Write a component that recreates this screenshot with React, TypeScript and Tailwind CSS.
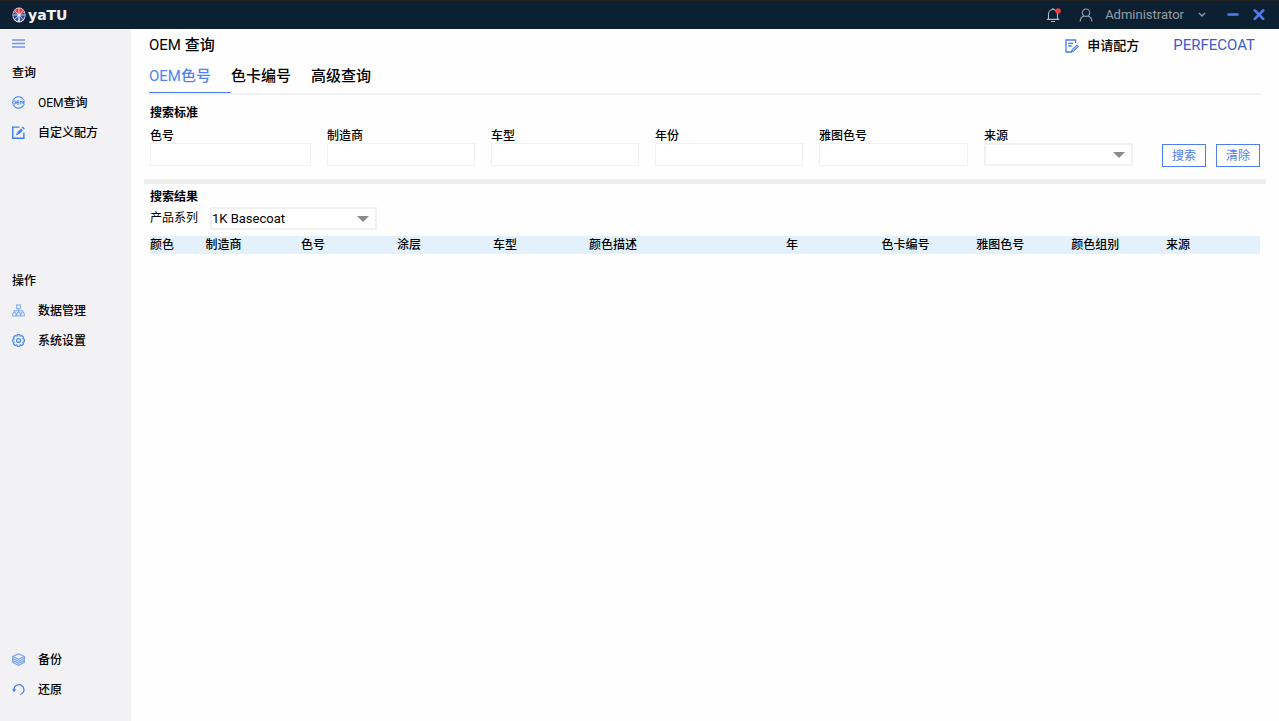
import type { ReactNode } from "react";

const OemIcon = () => (
  <svg viewBox="0 0 14 14" className="mb-px size-[13px]" fill="none" stroke="#3f7df0">
    <path d="M1.6 4.2A6 6 0 0 1 12.4 4.2M1.6 9.8A6 6 0 0 0 12.4 9.8" strokeWidth="1.1" />
    <path d="M.6 4v6M13.4 4v6" strokeWidth=".7" opacity=".7" />
    <rect x="1" y="5.3" width="2.8" height="3.4" rx=".8" strokeWidth="1" />
    <path d="M8 5.3H5.3v3.4H8M5.3 7h2.5M9.5 9.1V5.3l1.4 2.2 1.4-2.2v3.8" strokeWidth="1" />
  </svg>
);

const EditIcon = () => (
  <svg viewBox="0 0 14 14" className="mb-px size-[13px]" fill="none" stroke="#3f7df0">
    <path d="M8 1.2H.8v12h12V7" strokeWidth="1.5" />
    <path d="M6.2 8.3l4.6-4.7" strokeWidth="2.8" />
    <path d="M11.6 2.8l1.2-1.2" strokeWidth="3" />
    <path d="M4.4 9.9l.6-2.4 1.8 1.8z" fill="#3f7df0" stroke="none" />
  </svg>
);

const DataIcon = () => (
  <svg viewBox="0 0 14 14" className="mb-px size-[13px]" fill="none" stroke="#7fa9f5" strokeWidth="1.1">
    <rect x="5" y="1" width="4" height="4" />
    <path d="M7 5v4M2.5 9V7.2h9V9" />
    <path d="M.8 13v-2.5L2 9h1.2l1.2 1.5V13zM5.2 13v-2.5L6.4 9h1.2l1.2 1.5V13zM9.6 13v-2.5L10.8 9H12l1.2 1.5V13z" />
  </svg>
);

const GearIcon = () => (
  <svg viewBox="0 0 14 14" className="mb-px size-[13px]" fill="none" stroke="#4f8af3" strokeWidth="1.3">
    <path d="M5.7.7h2.6l.5 1.7 1.7-.8 1.9 1.9-.8 1.7 1.7.5v2.6l-1.7.5.8 1.7-1.9 1.9-1.7-.8-.5 1.7H5.7l-.5-1.7-1.7.8-1.9-1.9.8-1.7L.7 8.3V5.7l1.7-.5-.8-1.7 1.9-1.9 1.7.8z" strokeLinejoin="round" />
    <circle cx="7" cy="7" r="2.1" />
  </svg>
);

const LayersIcon = () => (
  <svg viewBox="0 0 14 14" className="mb-px size-[13px]" fill="none" stroke="#6fa0f5" strokeWidth="1.2" strokeLinejoin="round">
    <path d="M7 .8l6.3 3L7 6.8l-6.3-3z" />
    <path d="M.7 3.8V10L7 13.2l6.3-3.2V3.8M.7 6L7 9l6.3-3M.7 8L7 11l6.3-3" />
  </svg>
);

const RestoreIcon = () => (
  <svg viewBox="0 0 14 14" className="mb-px size-[13px]" fill="none" stroke="#3f7df0" strokeWidth="1.3">
    <path d="M2.2 8.2A5.4 5.4 0 1 1 8.8 12.4" />
    <path d="M0 6.8h4.6L2.2 10z" fill="#3f7df0" stroke="none" />
  </svg>
);

const RequestIcon = () => (
  <svg viewBox="0 0 14 14" className="size-[14px]" fill="none" stroke="#3f7df0" strokeWidth="1.3">
    <path d="M10.6 4V1H1v12h6.2" />
    <path d="M3.2 4.3h5M3.2 7h3.5" />
    <path d="M6.8 10.8l5-4.8 1.6 1.6-4.9 4.6-2 .4z" fill="#8db4f8" strokeWidth="1" />
  </svg>
);

const LogoMark = () => (
  <svg viewBox="0 0 14 16" className="h-4 w-[14px]">
    <ellipse cx="7" cy="8" rx="6.6" ry="7.6" fill="#e6e9ef" />
    <path d="M7 8L1.6 5A6 6.6 0 0 1 12.4 5z" fill="#e03a3e" />
    <path d="M7 8L1.6 5.3A6 6.6 0 0 0 6 14.4zM7 8l5.4-2.7A6 6.6 0 0 1 8 14.4z" fill="#2c4aa5" />
    <path d="M7 1v14M1 8h12M2.6 3.2l8.8 9.6M11.4 3.2l-8.8 9.6" stroke="#e6e9ef" strokeWidth=".8" />
    <circle cx="7" cy="8" r="1.5" fill="#e6e9ef" />
  </svg>
);

const NavItem = ({ icon, children }: { icon: ReactNode; children: ReactNode }) => (
  <a href="#" className="flex h-[30px] items-center gap-[13px] px-3">
    {icon}
    <span>{children}</span>
  </a>
);

const Arrow = () => (
  <svg viewBox="0 0 12 6" className="pointer-events-none absolute top-[9px] right-2 h-[6px] w-3">
    <path d="M0 0h12L6 6z" fill="#858b8f" />
  </svg>
);

const fields = [
  ["code", "色号"],
  ["maker", "制造商"],
  ["model", "车型"],
  ["year", "年份"],
  ["yatu", "雅图色号"],
];

const columns: [string, string][] = [
  ["颜色", "w-[5%]"],
  ["制造商", "w-[8.6%]"],
  ["色号", "w-[8.65%]"],
  ["涂层", "w-[8.65%]"],
  ["车型", "w-[8.65%]"],
  ["颜色描述", "w-[17.75%]"],
  ["年", "w-[8.6%]"],
  ["色卡编号", "w-[8.55%]"],
  ["雅图色号", "w-[8.55%]"],
  ["颜色组别", "w-[8.55%]"],
  ["来源", "w-[8.45%]"],
];

export default function App() {
  return (
    <div className="flex min-h-screen flex-col bg-[#fefefe] font-['Roboto','Noto_Sans_CJK_SC',sans-serif] text-xs text-black">
      <header className="flex h-[29px] items-center border-t border-[#222222] bg-[#0c2032] px-3">
        <div className="flex items-center gap-[2px]">
          <LogoMark />
          <span className="font-['DejaVu_Sans',sans-serif] text-[14px] leading-4 font-bold text-[#f1f3f5]">yaTU</span>
        </div>
        <div className="ml-auto flex items-center">
          <button aria-label="通知" className="mr-[18px]">
            <svg viewBox="0 0 16 16" className="size-4" fill="none" stroke="#b4babf" strokeWidth="1.1">
              <path d="M3.5 12V7a4.5 4.5 0 0 1 9 0v5M1.8 12.4h12.4M6 14.5h4M8 2.5V1" />
              <circle cx="13" cy="4" r="2.8" fill="#f5393d" stroke="none" />
            </svg>
          </button>
          <svg viewBox="0 0 14 14" className="mr-3 size-[14px]" fill="none" stroke="#969ca1" strokeWidth="1.2">
            <circle cx="7" cy="4.7" r="3.7" />
            <path d="M1.2 13.6c0-3 2-5 4-5.4M12.8 13.6c0-3-2-5-4-5.4" />
          </svg>
          <button className="flex items-center gap-[14px] text-[13px] text-[#979ea4]">
            Administrator
            <svg viewBox="0 0 8 6" className="h-[6px] w-2" fill="none" stroke="#979ea4" strokeWidth="1.3">
              <path d="M1 1l3 3 3-3" />
            </svg>
          </button>
          <button aria-label="最小化" className="ml-[21px]">
            <svg viewBox="0 0 12 12" className="size-3">
              <path d="M1.5 5.5h9" stroke="#4d7df0" strokeWidth="2.6" strokeLinecap="round" />
            </svg>
          </button>
          <button aria-label="关闭" className="mr-[2px] ml-[14px]">
            <svg viewBox="0 0 12 12" className="size-3">
              <path d="M1.8 1.4l8.4 8.4M10.2 1.4l-8.4 8.4" stroke="#4d7df0" strokeWidth="2.6" strokeLinecap="round" />
            </svg>
          </button>
        </div>
      </header>

      <div className="flex flex-1">
        <aside className="flex w-[131px] shrink-0 flex-col bg-[#f2f2f5] pb-4 font-medium">
          <button aria-label="菜单" className="flex h-[29px] items-center px-3">
            <svg viewBox="0 0 13 9" className="h-[9px] w-[13px]" stroke="#7396ea">
              <path d="M0 1h13M0 4.5h13M0 8h13" strokeWidth="1.6" />
            </svg>
          </button>
          <nav>
            <h2 className="px-3 leading-[30px]">查询</h2>
            <NavItem icon={<OemIcon />}><span className="font-normal">OEM</span>查询</NavItem>
            <NavItem icon={<EditIcon />}>自定义配方</NavItem>
          </nav>
          <nav className="mt-[118px]">
            <h2 className="px-3 leading-[30px]">操作</h2>
            <NavItem icon={<DataIcon />}>数据管理</NavItem>
            <NavItem icon={<GearIcon />}>系统设置</NavItem>
          </nav>
          <nav className="mt-auto">
            <NavItem icon={<LayersIcon />}>备份</NavItem>
            <NavItem icon={<RestoreIcon />}>还原</NavItem>
          </nav>
        </aside>

        <main className="min-w-0 flex-1 px-[13px]">
          <div className="flex h-[34px] items-center px-[5px]">
            <h1 className="text-[15px]">OEM <span className="font-medium">查询</span></h1>
            <a href="#" className="ml-auto flex items-center gap-2 text-[13px] font-medium">
              <RequestIcon />
              申请配方
            </a>
            <span className="mr-[6px] ml-[34px] text-[15px] text-[#3f5bd0]">PERFECOAT</span>
          </div>
          <div role="tablist" className="mx-[5px] flex h-8 border-b-2 border-[#f1f1f5] text-[15px] font-medium">
            <button role="tab" aria-selected="true" className="flex h-[30px] w-[82px] items-center border-b border-[#4d7df0] pb-px text-[#4d83f2]">
              <span className="font-normal">OEM</span>色号
            </button>
            <button role="tab" aria-selected="false" className="flex h-[30px] w-20 items-center pb-[2px]">色卡编号</button>
            <button role="tab" aria-selected="false" className="flex h-[30px] items-center pb-[2px]">高级查询</button>
          </div>

          <form className="px-[6px] pt-[9px] pb-3">
            <h2 className="leading-[18px] font-bold">搜索标准</h2>
            <div className="mt-[5px] flex items-start">
              <div className="grid flex-1 grid-cols-[161fr_148fr_148fr_148fr_149fr_149fr] gap-4">
                {fields.map(([id, label]) => (
                  <div key={id}>
                    <label htmlFor={id} className="block h-4 leading-[18px] font-medium">{label}</label>
                    <input id={id} className="block h-[23px] w-full border border-[#f1f1f1] bg-white px-1 outline-none" />
                  </div>
                ))}
                <div>
                  <label htmlFor="source" className="block h-4 leading-[18px] font-medium">来源</label>
                  <div className="relative">
                    <select id="source" className="block h-[23px] w-full appearance-none border-2 border-[#f1f1f1] bg-white outline-none">
                      <option></option>
                    </select>
                    <Arrow />
                  </div>
                </div>
              </div>
              <div className="ml-[29px] flex gap-[10px] pt-[17px] text-[#4d7df0]">
                <button type="button" className="h-[23px] w-11 border border-[#4d7df0] bg-white">搜索</button>
                <button type="button" className="h-[23px] w-11 border border-[#4d7df0] bg-white">清除</button>
              </div>
            </div>
          </form>

          <hr className="h-[5px] border-0 bg-[#eeeeee]" />

          <section className="px-[6px] pt-1">
            <h2 className="leading-[18px] font-bold">搜索结果</h2>
            <div className="flex items-start gap-3">
              <label htmlFor="series" className="leading-6">产品系列</label>
              <div className="relative mt-px w-[167px]">
                <select id="series" className="block h-[23px] w-full appearance-none border-2 border-[#f1f1f1] bg-white text-[13px] outline-none">
                  <option>1K Basecoat</option>
                </select>
                <Arrow />
              </div>
            </div>
            <table className="mt-[6px] w-full table-fixed border-collapse">
              <thead>
                <tr className="bg-[#e3f1fd] text-left">
                  {columns.map(([name, width]) => (
                    <th key={name} scope="col" className={`${width} p-0 leading-[18px] font-medium whitespace-nowrap`}>{name}</th>
                  ))}
                </tr>
              </thead>
            </table>
          </section>
        </main>
      </div>
    </div>
  );
}
